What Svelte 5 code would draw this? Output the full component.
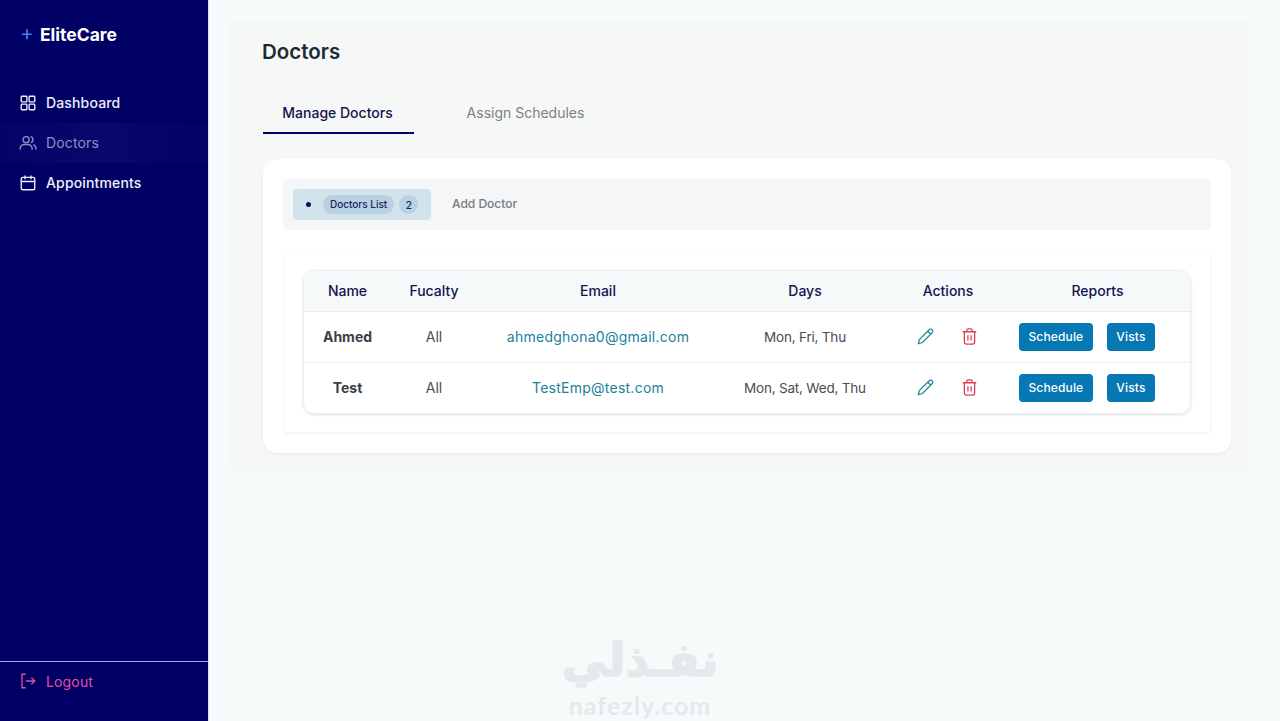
<script>
    const doctors = [
        { name: 'Ahmed', faculty: 'All', email: 'ahmedghona0@gmail.com', days: 'Mon, Fri, Thu' },
        { name: 'Test', faculty: 'All', email: 'TestEmp@test.com', days: 'Mon, Sat, Wed, Thu' }
    ];
</script>

<div class="layout">
    <aside class="sidebar">
        <div class="brand"><span class="plus">+</span> EliteCare</div>
        <nav>
            <a class="nav-item" href="#dashboard">
                <svg viewBox="0 0 24 24" class="nav-icon"><rect x="3" y="3" width="7.5" height="7.5" rx="1"/><rect x="13.5" y="3" width="7.5" height="7.5" rx="1"/><rect x="3" y="13.5" width="7.5" height="7.5" rx="1"/><rect x="13.5" y="13.5" width="7.5" height="7.5" rx="1"/></svg>
                Dashboard
            </a>
            <a class="nav-item active" href="#doctors">
                <svg viewBox="0 0 24 24" class="nav-icon"><circle cx="9.5" cy="7.5" r="4"/><path d="M1.5 21v-1.5a5.5 5.5 0 0 1 5.5-5.5h5a5.5 5.5 0 0 1 5.5 5.5V21"/><path d="M15.5 3.6a4 4 0 0 1 0 7.8"/><path d="M19 14.3a5.5 5.5 0 0 1 3.5 5.2V21"/></svg>
                Doctors
            </a>
            <a class="nav-item" href="#appointments">
                <svg viewBox="0 0 24 24" class="nav-icon"><rect x="3" y="4.5" width="18" height="16.5" rx="2"/><path d="M8 2v5M16 2v5M3 10h18"/></svg>
                Appointments
            </a>
        </nav>
        <div class="logout">
            <a href="#logout">
                <svg viewBox="0 0 24 24" class="nav-icon"><path d="M9 3H4v18h5"/><path d="M9 12h12M16.5 7.5 21 12l-4.5 4.5"/></svg>
                Logout
            </a>
        </div>
    </aside>

    <main class="main">
        <section class="panel">
            <h1>Doctors</h1>
            <div class="tabs">
                <div class="tab selected">Manage Doctors</div>
                <div class="tab">Assign Schedules</div>
            </div>
            <div class="card">
                <div class="subtabs">
                    <div class="subtab-on">
                        <span class="dot"></span>
                        <span class="pill">Doctors List</span>
                        <span class="count">2</span>
                    </div>
                    <div class="subtab-off">Add Doctor</div>
                </div>
                <div class="inner">
                    <div class="table-wrap">
                        <table>
                            <colgroup>
                                <col style="width: 87px" />
                                <col style="width: 86px" />
                                <col style="width: 242px" />
                                <col style="width: 172px" />
                                <col style="width: 114px" />
                                <col />
                            </colgroup>
                            <thead>
                                <tr>
                                    <th>Name</th>
                                    <th>Fucalty</th>
                                    <th>Email</th>
                                    <th>Days</th>
                                    <th>Actions</th>
                                    <th>Reports</th>
                                </tr>
                            </thead>
                            <tbody>
                                {#each doctors as doctor}
                                    <tr>
                                        <td class="name">{doctor.name}</td>
                                        <td>{doctor.faculty}</td>
                                        <td class="email">{doctor.email}</td>
                                        <td class="days">{doctor.days}</td>
                                        <td>
                                            <div class="actions">
                                                <svg viewBox="0 0 24 24" class="edit"><path d="M3 21l1.3-5.2L16.6 3.5a2.6 2.6 0 0 1 3.8 0 2.6 2.6 0 0 1 0 3.8L8.2 19.6 3 21z"/><path d="M14.8 5.3l3.9 3.9"/></svg>
                                                <svg viewBox="0 0 24 24" class="trash"><path d="M3.5 6h17M8.5 6V4.5a2 2 0 0 1 2-2h3a2 2 0 0 1 2 2V6M5.5 6v13a2.5 2.5 0 0 0 2.5 2.5h8a2.5 2.5 0 0 0 2.5-2.5V6M10 10.5v6.5M14 10.5v6.5"/></svg>
                                            </div>
                                        </td>
                                        <td>
                                            <div class="reports">
                                                <button>Schedule</button>
                                                <button>Vists</button>
                                            </div>
                                        </td>
                                    </tr>
                                {/each}
                            </tbody>
                        </table>
                    </div>
                </div>
            </div>
        </section>
        <div class="watermark">
            <div class="wm-ar" dir="rtl">نفـذلي</div>
            <div class="wm-en">nafezly.com</div>
        </div>
    </main>
</div>

<style>
    :global(body) {
        margin: 0;
        font-family: Inter, "Liberation Sans", sans-serif;
    }

    .layout {
        display: flex;
        width: 1280px;
        height: 721px;
        overflow: hidden;
        background-color: #f6fafb;
    }

    .sidebar {
        width: 208px;
        flex-shrink: 0;
        display: flex;
        flex-direction: column;
        background-color: #000064;
        border-right: 1px solid #d9dbe6;
    }

    .brand {
        height: 68px;
        padding-left: 20px;
        display: flex;
        align-items: center;
        gap: 6px;
        color: #fff;
        font-size: 17.5px;
        font-weight: 700;
        box-sizing: border-box;
    }

    .plus {
        color: #3f7fe8;
        font-weight: 400;
        font-size: 21px;
        line-height: 1;
        margin-top: -3px;
    }

    nav {
        margin-top: 15px;
    }

    .nav-item {
        height: 40px;
        padding: 0 0 1px 19px;
        box-sizing: border-box;
        display: flex;
        align-items: center;
        gap: 9px;
        color: #eef0fb;
        font-size: 14px;
        font-weight: 500;
        letter-spacing: 0.15px;
        text-decoration: none;
    }

    .nav-item.active {
        color: #8b90c4;
        font-weight: 400;
        background: linear-gradient(90deg, #030368, #08086c 50%, #020266);
    }

    .nav-icon {
        width: 18px;
        height: 18px;
        fill: none;
        stroke: currentColor;
        stroke-width: 1.8;
        flex-shrink: 0;
    }

    .logout {
        margin-top: auto;
        height: 60px;
        box-sizing: border-box;
        border-top: 1px solid #a9a7f0;
        display: flex;
        align-items: flex-start;
        padding: 10px 0 0 19px;
    }

    .logout a {
        display: flex;
        align-items: center;
        gap: 9px;
        color: #e0509f;
        font-size: 14px;
        letter-spacing: 0.15px;
        text-decoration: none;
    }

    .main {
        flex: 1;
        position: relative;
        padding: 20px 30px 0 20px;
    }

    .panel {
        background-color: #f6f7f7;
        padding: 19px 19px 17px 34px;
    }

    h1 {
        margin: 0 0 0 -1px;
        font-size: 20.5px;
        line-height: 25px;
        font-weight: 600;
        color: #1f2a37;
    }

    .tabs {
        display: flex;
        margin-top: 29px;
    }

    .tab {
        width: 151px;
        height: 41px;
        margin-right: 37px;
        box-sizing: border-box;
        padding: 11px 2px 0 0;
        text-align: center;
        font-size: 14px;
        color: #7c7f86;
    }

    .tab.selected {
        color: #14144f;
        font-weight: 500;
        border-bottom: 2px solid #000064;
    }

    .card {
        margin-top: 25px;
        background-color: #fff;
        border-radius: 14px;
        padding: 20px;
        box-shadow: 0 1px 3px rgba(0, 0, 0, 0.06);
    }

    .subtabs {
        height: 51px;
        display: flex;
        align-items: center;
        padding-left: 10px;
        background-color: #f5f6f7;
        border-radius: 4px;
    }

    .subtab-on {
        width: 138px;
        height: 31px;
        display: flex;
        align-items: center;
        background-color: #d3e3ec;
        border-radius: 4px;
        box-sizing: border-box;
        padding-left: 13px;
    }

    .dot {
        width: 5px;
        height: 5px;
        border-radius: 50%;
        background-color: #0c0c5a;
        margin-right: 12px;
    }

    .pill {
        font-size: 10px;
        font-weight: 500;
        color: #16245f;
        background-color: #b9d2e1;
        border-radius: 9px;
        padding: 0 7px;
        line-height: 19px;
    }

    .count {
        width: 19px;
        height: 19px;
        margin-left: 5px;
        border-radius: 50%;
        background-color: #b9d2e1;
        color: #16245f;
        font-size: 10px;
        font-weight: 500;
        display: flex;
        align-items: center;
        justify-content: center;
    }

    .subtab-off {
        margin: 0 0 2px 21px;
        font-size: 12px;
        font-weight: 500;
        color: #77797f;
    }

    .inner {
        margin-top: 20px;
        padding: 20px;
        border-radius: 4px;
        box-shadow: 0 1px 2px rgba(0, 0, 0, 0.05);
        border: 1px solid #f8f9fa;
        border-top-color: #fcfcfd;
        box-sizing: border-box;
        height: 183px;
    }

    .table-wrap {
        border: 1px solid #ecf0f2;
        border-radius: 11px;
        overflow: hidden;
        box-shadow: 0 1px 3px rgba(0, 0, 0, 0.12);
        margin: -1px;
    }

    table {
        width: 100%;
        border-collapse: collapse;
        table-layout: fixed;
    }

    th {
        height: 40px;
        padding: 0 0 1px;
        box-sizing: border-box;
        background-color: #f5f9fa;
        color: #14144f;
        font-size: 14px;
        font-weight: 500;
        border-bottom: 1px solid #e8ebee;
    }

    td {
        height: 50px;
        padding: 0;
        text-align: center;
        font-size: 14px;
        color: #4a4d52;
    }

    tbody tr + tr td {
        border-top: 1px solid #eceef0;
    }

    .name {
        font-weight: 700;
        color: #3c3f44;
    }

    .email {
        color: #217f9c;
        letter-spacing: 0.25px;
    }

    .days {
        font-size: 13.5px;
        letter-spacing: -0.2px;
    }

    .actions {
        display: flex;
        justify-content: center;
        gap: 25px;
        padding-right: 2px;
    }

    .edit,
    .trash {
        width: 19px;
        height: 19px;
        fill: none;
        stroke-width: 1.6;
    }

    .edit {
        stroke: #21879a;
    }

    .trash {
        stroke: #dc3f50;
    }

    .reports {
        display: flex;
        justify-content: center;
        gap: 14px;
        padding-right: 21px;
    }

    button {
        height: 28px;
        padding: 0 9.5px;
        border: none;
        border-radius: 4px;
        background-color: #0678b4;
        color: #fff;
        font-family: inherit;
        font-size: 12px;
        font-weight: 500;
        letter-spacing: 0.15px;
    }

    .watermark {
        position: absolute;
        left: 326px;
        top: 632px;
        width: 210px;
        text-align: center;
        color: #e4e9eb;
        font-family: "DejaVu Sans", sans-serif;
        font-weight: 700;
    }

    .wm-ar {
        font-size: 46px;
        line-height: 56px;
        -webkit-text-stroke: 1.5px #e4e9eb;
    }

    .wm-en {
        font-size: 25px;
        line-height: 26px;
        font-family: Lato, sans-serif;
        letter-spacing: 1px;
        margin-top: 4px;
    }
</style>
